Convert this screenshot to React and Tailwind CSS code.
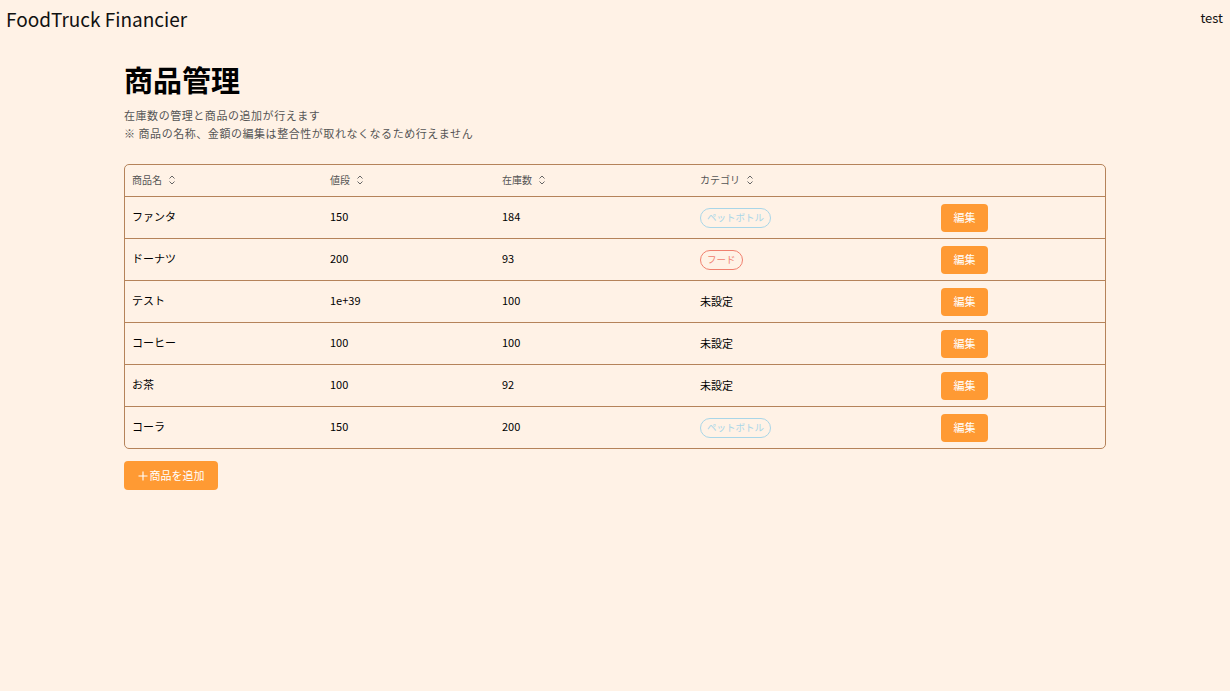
import React from "react";

const rows = [
  { name: "ファンタ", price: "150", stock: "184", cat: "pet" },
  { name: "ドーナツ", price: "200", stock: "93", cat: "food" },
  { name: "テスト", price: "1e+39", stock: "100", cat: null },
  { name: "コーヒー", price: "100", stock: "100", cat: null },
  { name: "お茶", price: "100", stock: "92", cat: null },
  { name: "コーラ", price: "150", stock: "200", cat: "pet" },
];

function SortIcon() {
  return (
    <svg width="8" height="10" viewBox="0 0 8 10" className="ml-[6px]" fill="none" stroke="#666" strokeWidth="1">
      <path d="M1.5 3.5 L4 1 L6.5 3.5" />
      <path d="M1.5 6.5 L4 9 L6.5 6.5" />
    </svg>
  );
}

function Category({ cat }) {
  if (cat === "pet")
    return (
      <span className="inline-flex h-[20px] items-center rounded-full border border-[#a9d6e8] px-[6px] text-[9.5px] text-[#a9d6e8]">
        ペットボトル
      </span>
    );
  if (cat === "food")
    return (
      <span className="inline-flex h-[20px] items-center rounded-full border border-[#f0806e] px-[6px] text-[9.5px] text-[#f0806e]">
        フード
      </span>
    );
  return <span className="text-[11px] text-black">未設定</span>;
}

export default function App() {
  return (
    <div
      className="min-h-[691px] bg-[#fff2e6] text-black"
      style={{ fontFamily: '"Noto Sans CJK JP", "Noto Sans", sans-serif' }}
    >
      <header className="flex items-start justify-between px-[6px] pt-[5px]">
        <div className="text-[19px] leading-[28px] text-[#111]">FoodTruck Financier</div>
        <div className="pt-[4px] pr-[1px] text-[13px] leading-[18px] text-[#111]">test</div>
      </header>

      <main className="ml-[124px] w-[982px] pt-[28px]">
        <h1 className="text-[29px] font-bold leading-[36px]">商品管理</h1>
        <div className="mt-[9px] text-[11px] leading-[18px] tracking-[0.55px] text-[#555]">
          <p>在庫数の管理と商品の追加が行えます</p>
          <p>※ 商品の名称、金額の編集は整合性が取れなくなるため行えません</p>
        </div>

        <div className="mt-[22px] overflow-hidden rounded-[5px] border border-[#b5835a]">
          <div className="grid h-[32px] grid-cols-[198px_172px_198px_241px_171px] items-center border-b border-[#b5835a] pb-[2px] text-[10px] text-[#555]">
            {["商品名", "値段", "在庫数", "カテゴリ"].map((h) => (
              <div key={h} className="flex items-center pl-[7px]">
                <span>{h}</span>
                <SortIcon />
              </div>
            ))}
            <div />
          </div>
          {rows.map((r, i) => (
            <div
              key={i}
              className={`grid grid-cols-[198px_172px_198px_241px_171px] items-center text-[11px] ${
                i < rows.length - 1 ? "h-[42px] border-b border-[#b5835a]" : "h-[41px]"
              }`}
            >
              <div className="pl-[7px] pb-[3px]">{r.name}</div>
              <div className="pl-[7px] pb-[3px]">{r.price}</div>
              <div className="pl-[7px] pb-[3px]">{r.stock}</div>
              <div className="pl-[7px]">
                <Category cat={r.cat} />
              </div>
              <div className="pl-[7px]">
                <button className="h-[28px] w-[47px] rounded-[4px] bg-[#ff9a33] text-[11px] text-white">
                  編集
                </button>
              </div>
            </div>
          ))}
        </div>

        <button className="mt-[12px] flex h-[29px] w-[94px] items-center justify-center gap-[2px] rounded-[4px] bg-[#ff9a33] text-[11px] text-white">
          <svg width="10" height="10" viewBox="0 0 10 10" stroke="white" strokeWidth="1.1" fill="none">
            <path d="M5 0.5 V9.5 M0.5 5 H9.5" />
          </svg>
          <span>商品を追加</span>
        </button>
      </main>
    </div>
  );
}
